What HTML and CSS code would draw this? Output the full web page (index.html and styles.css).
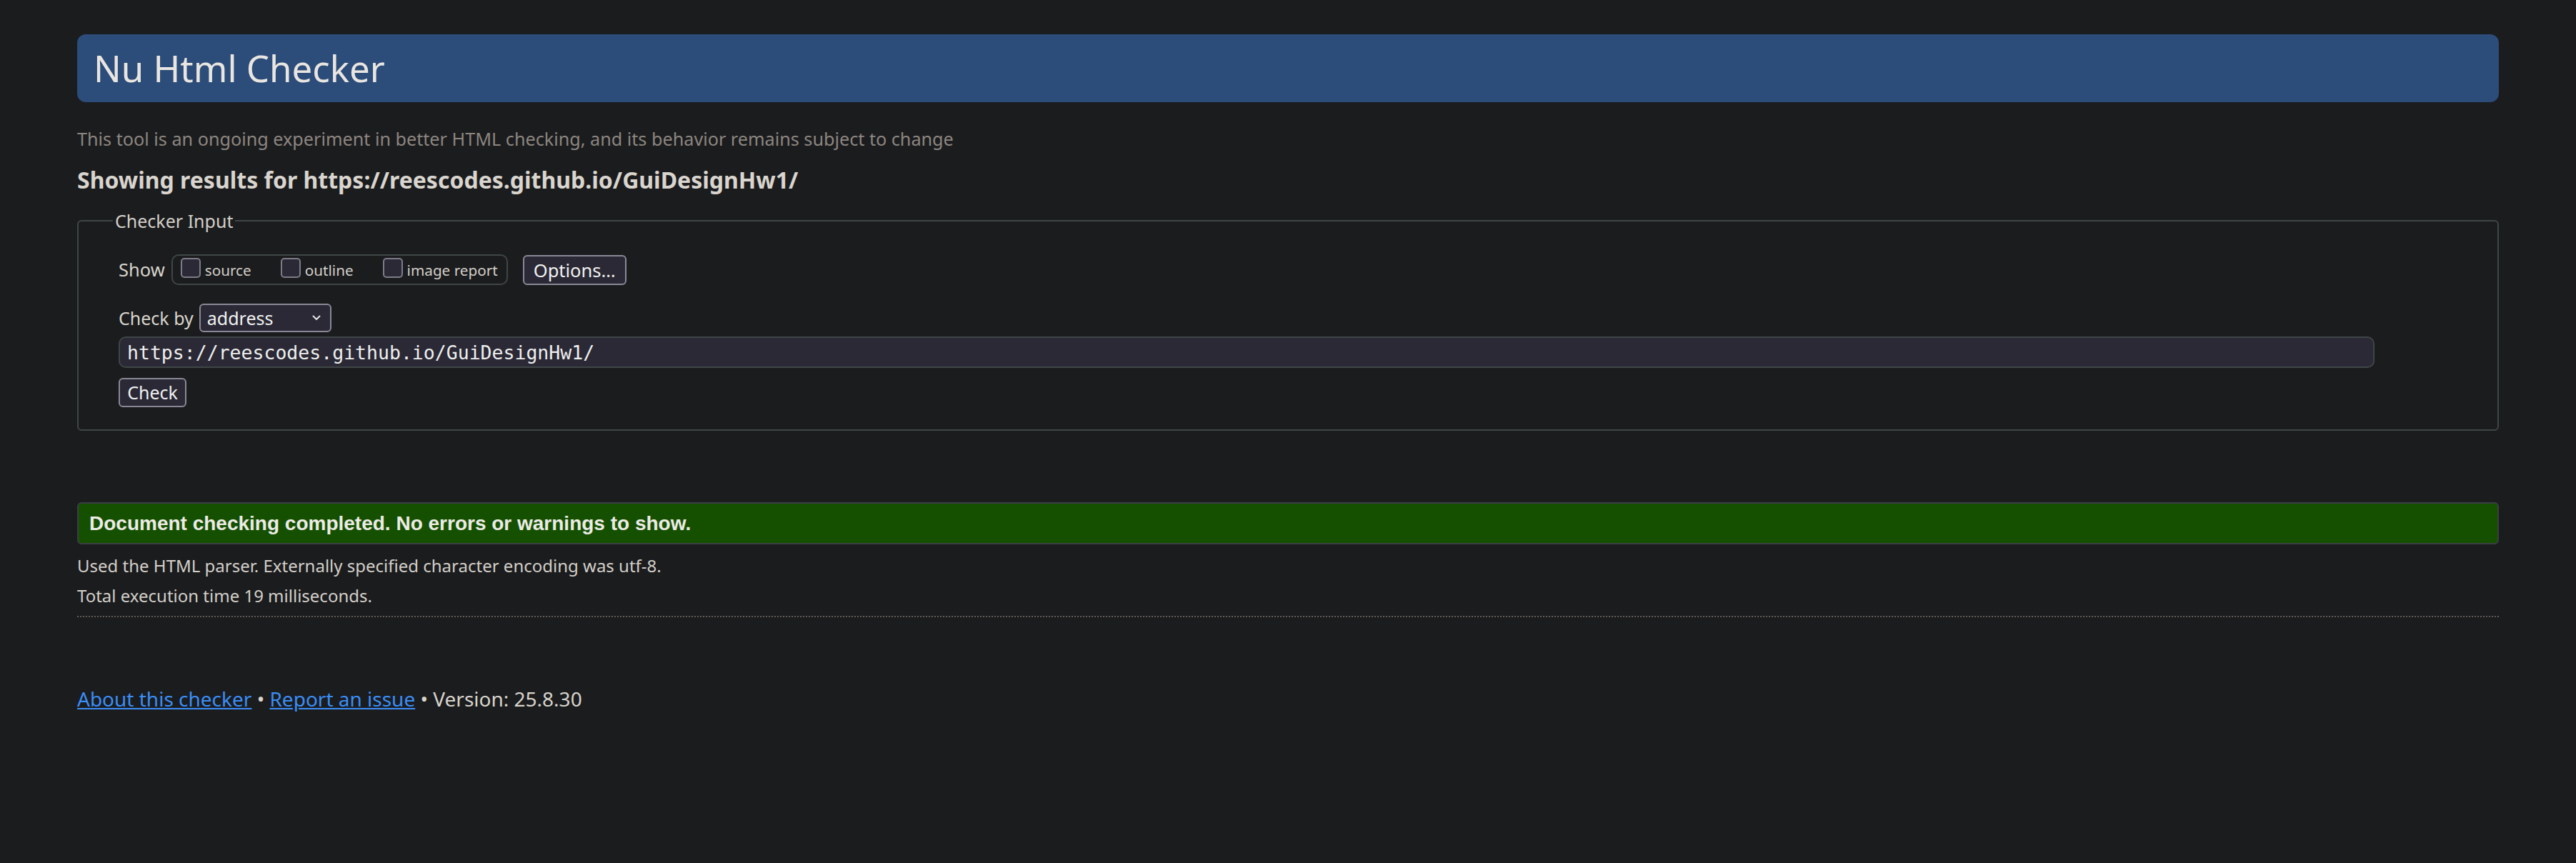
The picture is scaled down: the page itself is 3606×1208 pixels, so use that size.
FILE: index.html
```html
<!DOCTYPE html>
<html lang="en">
<head>
<meta charset="utf-8">
<title>Showing results for https://reescodes.github.io/GuiDesignHw1/ - Nu Html Checker</title>
<link rel="stylesheet" href="styles.css">
</head>
<body>
<header class="masthead"><h1 class="masthead-title">Nu Html Checker</h1></header>
<p class="tagline">This tool is an ongoing experiment in better HTML checking, and its behavior remains subject to change</p>
<h2 class="results-title">Showing results for https://reescodes.github.io/GuiDesignHw1/</h2>
<form class="checker-form">
  <fieldset class="checker">
    <legend class="checker-legend">Checker Input</legend>
    <div class="row show-row">
      <span class="row-label">Show</span>
      <div class="show-group">
        <label class="opt"><input class="box" type="checkbox"><span>source</span></label>
        <label class="opt"><input class="box" type="checkbox"><span>outline</span></label>
        <label class="opt"><input class="box" type="checkbox"><span>image report</span></label>
      </div>
      <button type="button" class="btn options-btn">Options…</button>
    </div>
    <div class="row by-row">
      <span class="row-label">Check by</span>
      <span class="select-wrap">
        <select class="by-select"><option>address</option></select>
        <svg class="chevron" width="12" height="8" viewBox="0 0 12 8"><polyline points="1.5,1.5 6,6 10.5,1.5" fill="none" stroke="#e6e6e6" stroke-width="2" stroke-linecap="round" stroke-linejoin="round"/></svg>
      </span>
    </div>
    <input class="url" type="url" value="https://reescodes.github.io/GuiDesignHw1/">
    <div class="submit-row"><button type="button" class="btn check-btn">Check</button></div>
  </fieldset>
</form>
<div class="success"><p class="success-text">Document checking completed. No errors or warnings to show.</p></div>
<div class="details">
  <p class="detail-line">Used the HTML parser. Externally specified character encoding was utf-8.</p>
  <p class="detail-line">Total execution time 19 milliseconds.</p>
</div>
<hr class="divider">
<p class="footer"><a href="#about">About this checker</a> • <a href="#issue">Report an issue</a> • Version: 25.8.30</p>
</body>
</html>
```
FILE: styles.css
```css
html { background: #1b1c1e; }
body {
  margin: 0;
  padding: 48px 108px 0;
  background: #1b1c1e;
  color: #d8d4cc;
  font-family: "Noto Sans", "Open Sans", sans-serif;
}
.masthead {
  height: 95px;
  background: #2c4c79;
  border-radius: 12px;
  padding-left: 23px;
  display: flex;
  align-items: center;
}
.masthead-title {
  margin: 0;
  font-weight: 400;
  font-size: 51px;
  line-height: 95px;
  color: #e9e6e1;
}
.tagline {
  margin: 33px 0 0;
  font-size: 25.2px;
  line-height: 36px;
  color: #8c8680;
}
.results-title {
  margin: 20px 0 0;
  font-size: 32px;
  line-height: 40px;
  font-weight: 700;
  color: #d9d5ce;
}
.checker-form { margin: 0; }
.checker {
  margin: 22px 0 0;
  padding: 32px 54px 31px 56px;
  border: 2px solid #3f4646;
  border-radius: 6px;
  min-width: 0;
}
.checker-legend {
  padding: 0 3px;
  margin-left: -8px;
  font-size: 25px;
  line-height: 30px;
  color: #d3cfc9;
}
.row {
  display: flex;
  align-items: center;
}
.row-label {
  font-size: 26px;
  color: #d8d4cc;
}
.show-row { height: 43px; }
.show-row .row-label { line-height: 43px; margin-right: 9px; font-size: 25.5px; }
.show-group {
  display: flex;
  align-items: center;
  height: 39px;
  border: 2px solid #3f4646;
  border-radius: 10px;
  padding: 0 12px 0 11px;
  gap: 41px;
}
.opt {
  display: flex;
  align-items: center;
  gap: 6px;
  font-size: 20.7px;
  line-height: 28px;
  color: #d3cfc9;
}
.box {
  appearance: none;
  -webkit-appearance: none;
  margin: -6px 0 0;
  width: 28px;
  height: 28px;
  border: 2px solid #7d7b88;
  border-radius: 5px;
  background: #2a2935;
}
.btn {
  font-family: "Noto Sans", "Open Sans", sans-serif;
  color: #f1f1f1;
  background: #2a2935;
  border: 2px solid #8a8896;
  border-radius: 6px;
  padding: 0 10px;
  margin: 0;
}
.options-btn {
  margin-left: 21px;
  height: 42px;
  width: 145px;
  font-size: 25.5px;
  line-height: 38px;
}
.by-row {
  margin-top: 26px;
  height: 40px;
}
.by-row .row-label { font-size: 25px; line-height: 40px; margin-right: 8px; }
.select-wrap {
  position: relative;
  display: block;
  width: 185px;
  height: 40px;
}
.by-select {
  appearance: none;
  -webkit-appearance: none;
  width: 185px;
  height: 40px;
  margin: 0;
  padding: 0 0 0 9px;
  border: 2px solid #8a8896;
  border-radius: 6px;
  background: #2a2935;
  color: #f1f1f1;
  font-family: "Noto Sans", "Open Sans", sans-serif;
  font-size: 25px;
}
.chevron {
  position: absolute;
  left: 158px;
  top: 16px;
  pointer-events: none;
}
.url {
  display: block;
  box-sizing: border-box;
  margin: 6px 0 0;
  width: 3158px;
  height: 44px;
  padding: 0 10px;
  border: 2px solid #3f4646;
  border-radius: 10px;
  background: #2a2935;
  color: #efefef;
  font-family: "DejaVu Sans Mono", "Liberation Mono", monospace;
  font-size: 26.5px;
}
.submit-row { margin-top: 14px; display: flex; }
.check-btn {
  height: 41px;
  width: 95px;
  font-size: 25px;
  line-height: 37px;
}
.success {
  margin-top: 100px;
  height: 55px;
  display: flex;
  align-items: center;
  background: #155000;
  border: 2px solid #3a3e43;
  border-radius: 6px;
  padding-left: 15px;
}
.success-text {
  margin: 0;
  font-family: "Liberation Sans", Arial, sans-serif;
  font-weight: 700;
  font-size: 28px;
  line-height: 55px;
  color: #ecebe6;
}
.details { margin-top: 9px; }
.detail-line {
  margin: 0;
  font-size: 24px;
  line-height: 42px;
  color: #d3cfc9;
}
.divider {
  margin: 7px 0 0;
  border: 0;
  border-top: 2px dotted #5f5b58;
  height: 0;
}
.footer {
  margin: 96px 0 0;
  font-size: 28px;
  line-height: 36px;
  color: #d8d4cc;
}
.footer a { color: #3a8ef6; text-decoration: underline; }
```
